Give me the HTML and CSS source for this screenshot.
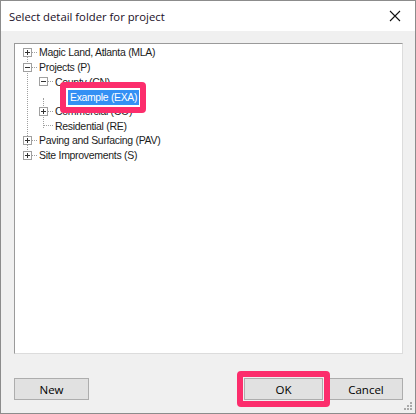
FILE: index.html
```html
<!DOCTYPE html>
<html lang="en">
<head>
    <meta charset="UTF-8">
    <title>Select detail folder for project</title>
    <link rel="stylesheet" href="styles.css">
</head>
<body>
    <div class="dialog">
        <!-- Title Bar -->
        <div class="titlebar">
            <span class="title">Select detail folder for project</span>
            <svg class="close" width="12" height="12" viewBox="0 0 12 12">
                <path d="M1 1 L11 11 M11 1 L1 11" stroke="#111" stroke-width="1.1" fill="none"/>
            </svg>
        </div>

        <!-- Folder Tree -->
        <div class="dialog-body">
            <div class="tree">
                <div class="tree-lines"></div>
                <div class="row lvl1">
                    <span class="box plus"></span><span class="hline"></span><span class="label">Magic Land, Atlanta (MLA)</span>
                </div>
                <div class="row lvl1">
                    <span class="box minus"></span><span class="hline"></span><span class="label">Projects (P)</span>
                </div>
                <div class="row lvl2">
                    <span class="box minus"></span><span class="hline"></span><span class="label">County (CN)</span>
                </div>
                <div class="row lvl3">
                    <span class="label selected">Example (EXA)</span>
                </div>
                <div class="row lvl2">
                    <span class="box plus"></span><span class="hline"></span><span class="label">Commercial (CO)</span>
                </div>
                <div class="row lvl2 leaf">
                    <span class="hline long"></span><span class="label">Residential (RE)</span>
                </div>
                <div class="row lvl1">
                    <span class="box plus"></span><span class="hline"></span><span class="label">Paving and Surfacing (PAV)</span>
                </div>
                <div class="row lvl1">
                    <span class="box plus"></span><span class="hline"></span><span class="label">Site Improvements (S)</span>
                </div>
                <div class="callout tree-callout"></div>
            </div>

            <!-- Buttons -->
            <div class="buttons">
                <button class="btn">New</button>
                <span class="spacer"></span>
                <button class="btn btn-ok">OK</button>
                <button class="btn btn-cancel">Cancel</button>
                <div class="callout ok-callout"></div>
            </div>
        </div>

        <svg class="grip" width="10" height="10" viewBox="0 0 10 10">
            <rect x="7" y="1" width="2" height="2" fill="#aaa"/>
            <rect x="4" y="4" width="2" height="2" fill="#aaa"/>
            <rect x="7" y="4" width="2" height="2" fill="#aaa"/>
            <rect x="1" y="7" width="2" height="2" fill="#aaa"/>
            <rect x="4" y="7" width="2" height="2" fill="#aaa"/>
            <rect x="7" y="7" width="2" height="2" fill="#aaa"/>
        </svg>
    </div>
</body>
</html>
```

FILE: styles.css
```css
:root {
    --color-window: #f0f0f0;
    --color-border: #8c8c8c;
    --color-button: #e1e1e1;
    --color-button-border: #adadad;
    --color-select: #3390f4;
    --color-callout: #fc2d6c;
    --color-dots: #a0a0a0;
}

body {
    margin: 0;
    background: #fff;
}

.dialog {
    position: relative;
    width: 416px;
    height: 414px;
    box-sizing: border-box;
    border: 1px solid var(--color-border);
    background: var(--color-window);
    display: flex;
    flex-direction: column;
    font-family: "Liberation Sans", Arial, sans-serif;
    color: #000;
}

/* Title Bar */
.titlebar {
    height: 30px;
    background: #fff;
    display: flex;
    align-items: center;
    padding: 0 10px 0 8px;
}

.title {
    flex: 1;
    font-family: "Open Sans", "Liberation Sans", sans-serif;
    font-size: 11.3px;
    color: #1a0f1f;
    padding-top: 1px;
}

.close {
    margin-right: 4px;
}

.dialog-body {
    flex: 1;
    display: flex;
    flex-direction: column;
    padding: 12px 12px 13px 13px;
}

/* Folder Tree */
.tree {
    position: relative;
    flex: 1;
    background: #fff;
    border: 1px solid;
    border-color: #9a9a9a #dcdcdc #dcdcdc #9a9a9a;
    padding-top: 1px;
    font-size: 10.5px;
    letter-spacing: -0.3px;
    color: #1c1c1c;
}

/* root connector */
.tree-lines {
    position: absolute;
    left: 12px;
    top: 9px;
    height: 103px;
    border-left: 1px dotted var(--color-dots);
}

/* level 2 connector */
.tree::after {
    content: "";
    position: absolute;
    left: 28px;
    top: 54px;
    height: 30px;
    border-left: 1px dotted var(--color-dots);
}

.row {
    position: relative;
    height: 14.7px;
    display: flex;
    align-items: center;
    white-space: nowrap;
}

.lvl1 { padding-left: 8px; }
.lvl2 { padding-left: 24px; }
.lvl3 { padding-left: 53px; }
.leaf { padding-left: 28px; }

.box {
    position: relative;
    z-index: 1;
    width: 7px;
    height: 7px;
    border: 1px solid #a0a0a0;
    background: #fff;
    flex: none;
}

.box::before,
.box::after {
    content: "";
    position: absolute;
    background: #333;
}

.box::before {
    left: 1px;
    top: 3px;
    width: 5px;
    height: 1px;
}

.plus::after {
    left: 3px;
    top: 1px;
    width: 1px;
    height: 5px;
}

.hline {
    width: 5px;
    border-top: 1px dotted var(--color-dots);
    margin-right: 1px;
}

.hline.long {
    width: 10px;
}

.label {
    line-height: 14px;
    padding: 0 1px;
}

.selected {
    background: var(--color-select);
    color: #fff;
    font-size: 10.4px;
    letter-spacing: -0.3px;
    line-height: 15px;
    padding: 0 2px;
    margin-top: 2px;
}

/* Buttons */
.buttons {
    position: relative;
    display: flex;
    gap: 6px;
    margin-top: 24px;
    height: 22px;
}

.spacer {
    flex: 1;
}

.btn {
    width: 75px;
    height: 22px;
    background: var(--color-button);
    border: 1px solid var(--color-button-border);
    font-family: "Open Sans", "Liberation Sans", sans-serif;
    font-size: 11.5px;
    color: #000;
    padding: 0;
}

.btn-ok {
    width: 79px;
}

.btn-cancel {
    width: 74px;
}

/* Callout frames */
.callout {
    position: absolute;
    border: 6px solid var(--color-callout);
    border-radius: 4px;
    box-sizing: border-box;
    pointer-events: none;
}

.tree-callout {
    left: 45px;
    top: 38px;
    width: 86px;
    height: 31px;
}

.ok-callout {
    left: 223px;
    top: -7px;
    width: 93px;
    height: 36px;
}

.grip {
    position: absolute;
    right: 2px;
    bottom: 2px;
}
```
